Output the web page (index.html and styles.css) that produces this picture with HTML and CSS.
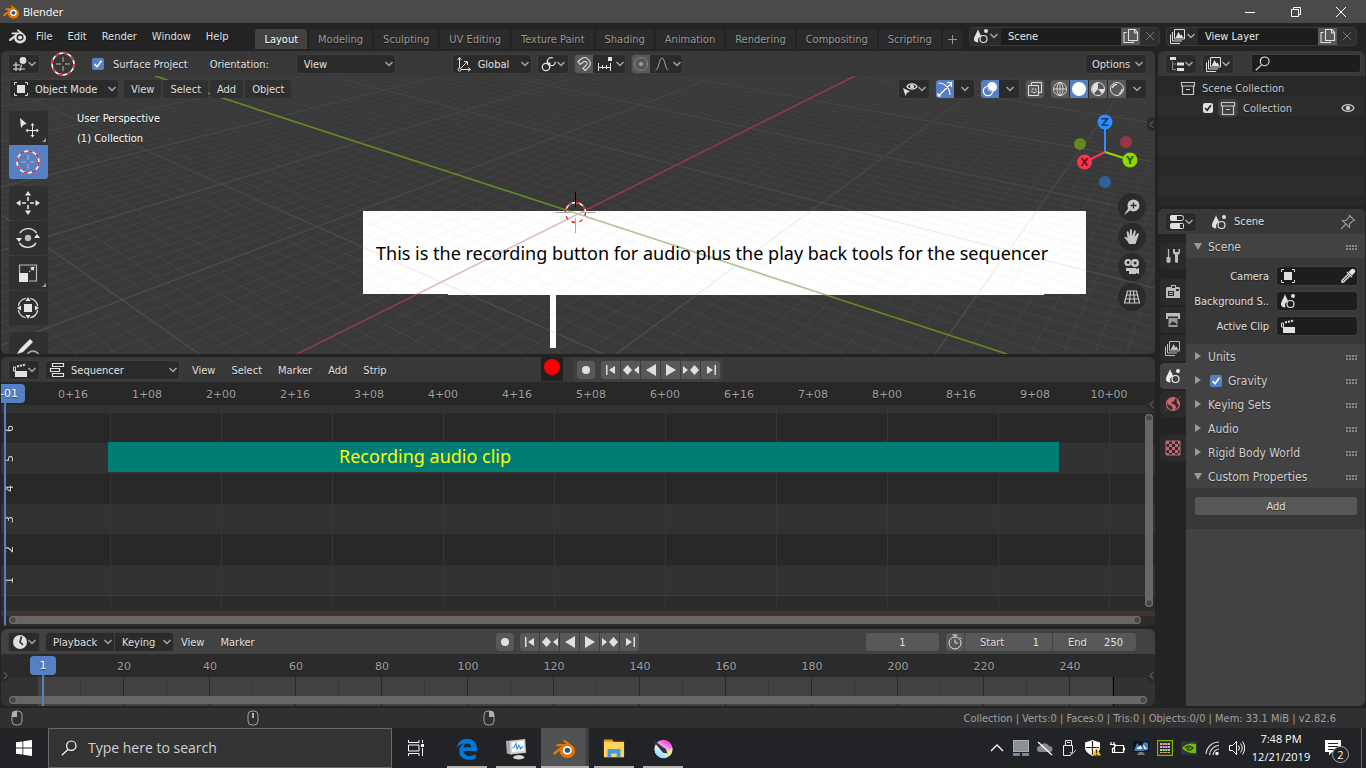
FILE: index.html
```html
<!DOCTYPE html>
<html lang="en">
<head>
<meta charset="utf-8">
<title>Blender</title>
<link rel="stylesheet" href="styles.css">
</head>
<body>
<svg class="defs" aria-hidden="true">
  <defs>
    <symbol id="blender" viewBox="0 0 24 24"><path fill="currentColor" d="M7.35 14.831c.006.314.106.922.256 1.398a7.372 7.372 0 0 0 1.593 2.757 8.227 8.227 0 0 0 2.787 2.001 8.947 8.947 0 0 0 3.66.76 8.964 8.964 0 0 0 3.657-.772 8.285 8.285 0 0 0 2.785-2.01 7.428 7.428 0 0 0 1.592-2.762 6.964 6.964 0 0 0 .25-3.074 7.123 7.123 0 0 0-1.016-2.779 7.764 7.764 0 0 0-1.852-2.043L13.566 2.55c-.492-.378-1.319-.376-1.86.002-.547.382-.609 1.015-.123 1.415l3.126 2.543-9.53.01c-.788.001-1.545.518-1.695 1.172-.154.665.38 1.217 1.2 1.22l4.83-.01-8.654 6.642c-.813.622-1.075 1.658-.563 2.313.52.667 1.625.668 2.447.004L7.414 14s-.069.52-.063.831z"/><ellipse class="eye-white" cx="15.600" cy="13.300" rx="4.900" ry="4.700"/><ellipse class="eye-ball" cx="15.700" cy="13.300" rx="3" ry="2.800"/></symbol>
    <symbol id="cursor3d" viewBox="0 0 24 24"><circle cx="12" cy="12" r="11" fill="none" stroke="#f4f4f4" stroke-width="1.600"/><circle cx="12" cy="12" r="11" fill="none" stroke="#e02424" stroke-width="1.600" stroke-dasharray="4.320"/><path d="M12 5v5M12 14v5M5 12h5M14 12h5" stroke="#b4b4b4" fill="none"/></symbol>
    <symbol id="area3d" viewBox="0 0 16 16"><path d="M4 6v9M9.500 8.500 8 15M1 9h7M1 13h12" stroke="currentColor" fill="none" stroke-width="1.100"/><circle cx="11" cy="4.500" r="3.400" fill="currentColor"/></symbol>
    <symbol id="object" viewBox="0 0 16 16"><path d="M4 1.500H1.500V4M12 1.500h2.500V4M4 14.500H1.500V12M12 14.500h2.500V12" stroke="currentColor" fill="none"/><path d="M4 4h8v8H4z" fill="currentColor"/></symbol>
    <symbol id="axes" viewBox="0 0 16 16"><path d="M3.500 12V2M1.500 4l2-2.500 2 2.500M5 13.500h9M12 11.500l2.500 2-2.500 2M4.500 12.500 11 6M8 5.500h3.500V9" fill="none" stroke="currentColor"/><circle cx="3.500" cy="13.500" r="1.500" fill="none" stroke="currentColor"/></symbol>
    <symbol id="pivot" viewBox="0 0 16 16"><circle cx="10.300" cy="5.700" r="4" fill="none" stroke="currentColor" stroke-width="1.300" stroke-dasharray="20 5"/><circle cx="5" cy="11" r="3.700" fill="none" stroke="currentColor" stroke-width="1.300"/><circle cx="8" cy="8" r="1.700" fill="currentColor"/></symbol>
    <symbol id="magnet" viewBox="0 0 16 16"><path d="M2 5.500 6.500 2C11 0 16 6 13.500 10L9.500 14.500 7 12.500 10.500 8.800C12 6.500 9.500 4.500 7.500 5.700L4 8.500z" fill="none" stroke="currentColor" stroke-width="1.100"/></symbol>
    <symbol id="snapinc" viewBox="0 0 16 16"><path d="M1.500 7v8M13.500 7v8M5.500 9v4M9.500 9v4M1.500 11.500h12" stroke="currentColor" fill="none"/><path d="M11 1h4v4h-4z" fill="currentColor"/></symbol>
    <symbol id="prop" viewBox="0 0 16 16"><circle cx="8" cy="8" r="6.500" fill="none" stroke="#858585"/><circle cx="8" cy="8" r="2" fill="currentColor"/></symbol>
    <symbol id="curve" viewBox="0 0 16 16"><path d="M1.500 14C5 14 5 2 8 2s3 12 6.500 12" fill="none" stroke="currentColor"/></symbol>
    <symbol id="scene" viewBox="0 0 16 16"><path d="M5 1C4 5 1 8 1 11.500 1 13.500 3 14.500 5.500 14.300A5 5 0 0 1 8 8C7 5 5.800 4 5 1z" fill="currentColor"/><circle cx="10.500" cy="11" r="3.500" fill="none" stroke="currentColor" stroke-width="1.200"/><circle cx="13" cy="3" r="2" fill="currentColor"/></symbol>
    <symbol id="layers" viewBox="0 0 16 16"><path d="M4.500 1.500h10v9.500h-10zM2.500 4v9H12M.5 6.500v9H10" fill="none" stroke="currentColor"/><path d="m5.500 10 3-6 2 3.500 1-1 2 3.500z" fill="currentColor"/></symbol>
    <symbol id="copy" viewBox="0 0 16 16"><path d="M5.500 1.500H12l2.500 3v8h-9zM11.500 2v3h3M3.500 4.500h-2.500v10h9.500v-1" fill="none" stroke="currentColor" stroke-width="1.100"/></symbol>
    <symbol id="x" viewBox="0 0 16 16"><path d="m4 4 8 8m0-8-8 8" stroke="currentColor" fill="none"/></symbol>
    <symbol id="visible" viewBox="0 0 16 16"><path d="M5 5.500C7 2 13 2 15 5.500 13 9 7 9 5 5.500z" fill="none" stroke="currentColor" stroke-width="1.400"/><circle cx="10" cy="5.500" r="2" fill="currentColor"/><path d="m1 7 7 3.500-3 1.200L3.500 15z" fill="currentColor"/></symbol>
    <symbol id="gizmo" viewBox="0 0 16 16"><path d="M1.500 2C8 2 13 7 13 14M2 14.500 14 2.500M10 1.500h4.500V6M1 12v3h3" fill="none" stroke="currentColor" stroke-width="1.200"/></symbol>
    <symbol id="overlay" viewBox="0 0 16 16"><circle cx="10" cy="6" r="5" fill="currentColor"/><circle cx="6" cy="10" r="4.700" fill="none" stroke="currentColor" stroke-width="1.200"/><path d="M5.500 5.500a5 5 0 0 0 5 5" stroke="#5680c2" fill="none"/></symbol>
    <symbol id="xray" viewBox="0 0 16 16"><path d="M4.500 4V1.500h10v10H12M1.500 4.500h10v10h-10z" fill="none" stroke="currentColor"/><path d="M5 11.500V8h4v3.500z" fill="none" stroke="currentColor" stroke-dasharray="2 1"/></symbol>
    <symbol id="wire" viewBox="0 0 16 16"><g fill="none" stroke="currentColor" stroke-width=".9"><circle cx="8" cy="8" r="6.500"/><ellipse cx="8" cy="8" rx="3" ry="6.500"/><path d="M1.500 8h13M8 1.500v13"/></g></symbol>
    <symbol id="solid" viewBox="0 0 16 16"><circle cx="8" cy="8" r="7" fill="currentColor"/></symbol>
    <symbol id="material" viewBox="0 0 16 16"><circle cx="8" cy="8" r="6.500" fill="none" stroke="currentColor"/><path d="M8 1.500V8l-4 4.500A6.500 6.500 0 0 1 8 1.500zM8 8h6.500A6.500 6.500 0 0 1 12 13z" fill="currentColor"/></symbol>
    <symbol id="rendered" viewBox="0 0 16 16"><circle cx="8" cy="8" r="6.500" fill="none" stroke="currentColor"/><path d="M3.500 7A4.500 4.500 0 0 1 8 3.500M10 13a6 6 0 0 0 3-5" fill="none" stroke="currentColor" stroke-width="1.400"/></symbol>
    <symbol id="clip" viewBox="0 0 16 16"><path d="M3 9h12v6H3z" fill="currentColor"/><path d="M1.500 5v4h2V5z" fill="none" stroke="currentColor"/><path d="m5 4.500 9-2" stroke="currentColor" stroke-width="2" stroke-dasharray="2 1" fill="none"/></symbol>
    <symbol id="seq" viewBox="0 0 16 16"><path d="M3.500 1.500h11v3h-11zM1.500 6.500h9v3h-9zM3.500 11.500h11v3h-11z" fill="none" stroke="currentColor" stroke-width="1.200"/></symbol>
    <symbol id="clock" viewBox="0 0 16 16"><circle cx="8" cy="8" r="7" fill="currentColor"/><path d="M9.500 2.500 8 8l3 3" stroke="#282828" stroke-width="1.600" fill="none"/></symbol>
    <symbol id="stopwatch" viewBox="0 0 16 16"><circle cx="8" cy="9" r="6" fill="none" stroke="currentColor"/><path d="M8 3V1M5.500 1h5M8 5.500V9h3M13 3.500l1.500 1.500" stroke="currentColor" fill="none"/></symbol>
    <symbol id="rec" viewBox="0 0 16 16"><circle cx="8" cy="8" r="4" fill="currentColor"/></symbol>
    <symbol id="first" viewBox="0 0 16 16"><path d="M3 3h1.500v10H3zM12 4v8L6 8z" fill="currentColor"/></symbol>
    <symbol id="prevkey" viewBox="0 0 16 16"><path d="m0 8 4.500-5L9 8l-4.500 5zM16 4v8l-5-4z" fill="currentColor"/></symbol>
    <symbol id="rev" viewBox="0 0 16 16"><path d="M13 2v12L3 8z" fill="currentColor"/></symbol>
    <symbol id="play" viewBox="0 0 16 16"><path d="M3 2v12l10-6z" fill="currentColor"/></symbol>
    <symbol id="nextkey" viewBox="0 0 16 16"><path d="m16 8-4.500-5L7 8l4.500 5zM0 4v8l5-4z" fill="currentColor"/></symbol>
    <symbol id="last" viewBox="0 0 16 16"><path d="M11.500 3H13v10h-1.500zM4 4v8l6-4z" fill="currentColor"/></symbol>
    <symbol id="search" viewBox="0 0 16 16"><circle cx="10.300" cy="5.700" r="4.700" fill="none" stroke="currentColor" stroke-width="1.200"/><path d="M7 9.500.8 15.200" stroke="currentColor" stroke-width="1.200"/></symbol>
    <symbol id="tree" viewBox="0 0 16 16"><path d="M1 1h6v3H1zM8 6.500h7v3H8zM8 12h7v3H8z" fill="currentColor"/><path d="M3.500 5v8.500H7M3.500 8H7" stroke="#888" fill="none"/></symbol>
    <symbol id="box" viewBox="0 0 16 16"><path d="M1.500 2.500h13V6h-13zM2.500 6v8.500h11V6M6 9.500h4" fill="none" stroke="currentColor" stroke-width="1.200"/></symbol>
    <symbol id="eye" viewBox="0 0 16 16"><path d="M2 8C4 3.500 12 3.500 14 8 12 12.500 4 12.500 2 8z" fill="none" stroke="currentColor" stroke-width="1.300"/><circle cx="8" cy="8" r="2.300" fill="currentColor"/></symbol>
    <symbol id="props" viewBox="0 0 16 16"><rect x="1.500" y="1.500" width="13" height="5" rx="2" fill="none" stroke="currentColor"/><rect x="1" y="1" width="7" height="6" rx="2" fill="currentColor"/><rect x="1" y="9" width="14" height="6" rx="2" fill="currentColor"/><path d="M11 10h3v4h-3z" fill="#282828"/></symbol>
    <symbol id="pin" viewBox="0 0 16 16"><path d="m9.500 1.500 5 5-2 .5-3 3v3.500l-7-7H6l3-3zM6 10l-5 5" fill="none" stroke="currentColor" stroke-width="1.100"/></symbol>
    <symbol id="tools" viewBox="0 0 16 16"><path d="M3.500 1v8" stroke="currentColor" stroke-width="1.200"/><path d="M1.500 9h4v5q-2 2-4 0zM8 1v4l2 2v7q1.500 2 3 0V7l2-2V1l-1.500 0v3h-3.500V1z" fill="currentColor"/></symbol>
    <symbol id="render" viewBox="0 0 16 16"><path d="M2 3h4V1h5v2h3l1 1v10H1V4z" fill="currentColor"/><path d="M3 7h6v5H3zM11 5h3v2h-3zM7 2h3v2H7z" fill="#2b2b2b"/><path d="M4 8.500h4M4 10.500h4" stroke="currentColor"/></symbol>
    <symbol id="output" viewBox="0 0 16 16"><path d="M1 1h14v6h-2V4.500H3V7H1z" fill="currentColor"/><path d="M3.500 6h9v9h-9z" fill="currentColor" opacity=".75"/><path d="m4.500 13 3-4 1.500 2 1-1 2 3z" fill="#2b2b2b"/></symbol>
    <symbol id="world" viewBox="0 0 16 16"><circle cx="8" cy="8" r="6.500" fill="none" stroke="currentColor" stroke-width="1.200"/><path d="M2 5 6 2l4 0-1 3-3 1 1 2 3 1 1 3-3 3-1-5-4-2zM12 4l2 2v3l-2-2zM0 15l2-2M14 2l2-2" fill="currentColor" stroke="currentColor" stroke-width=".5"/></symbol>
    <symbol id="checker" viewBox="0 0 16 16"><path d="M1 1h14v14H1z" fill="none" stroke="currentColor"/><path d="M1 1h3v3H1zM7 1h3v3H7zM13 1h2v3h-2zM4 4h3v3H4zM10 4h3v3h-3zM1 7h3v3H1zM7 7h3v3H7zM13 7h2v3h-2zM4 10h3v3H4zM10 10h3v3h-3zM1 13h3v2H1zM7 13h3v2H7zM13 13h2v2h-2z" fill="currentColor"/></symbol>
    <symbol id="dropper" viewBox="0 0 16 16"><path d="M14.500 1.500c1 1 1 2.500 0 3.500L12 7.500 8.500 4 11 1.500c1-1 2.500-1 3.500 0z" fill="currentColor"/><path d="m7 4 5 5M9 5.500l-7 7V14h1.500l7-7" fill="none" stroke="currentColor" stroke-width="1.400"/></symbol>
  </defs>
</svg>

<header class="titlebar">
  <svg class="i16 logo"><use href="#blender"/></svg>
  <h1>Blender</h1>
  <div class="winbtns">
    <button aria-label="Minimize"><svg viewBox="0 0 12 12"><path d="M1 6.500h10"/></svg></button>
    <button aria-label="Restore"><svg viewBox="0 0 12 12"><path d="M1.500 3.500h7v7h-7zM3.500 3.500v-2h7v7h-2"/></svg></button>
    <button aria-label="Close"><svg viewBox="0 0 12 12"><path d="m1 1 10 10M11 1 1 11"/></svg></button>
  </div>
</header>

<nav class="menubar">
  <button class="plain" aria-label="Blender menu"><svg class="i16"><use href="#blender"/></svg></button>
  <button class="plain">File</button><button class="plain">Edit</button><button class="plain">Render</button><button class="plain">Window</button><button class="plain">Help</button>
  <div class="tabs">
    <button class="on">Layout</button><button>Modeling</button><button>Sculpting</button><button>UV Editing</button><button>Texture Paint</button><button>Shading</button><button>Animation</button><button>Rendering</button><button>Compositing</button><button>Scripting</button><button class="add" aria-label="Add workspace"><svg viewBox="0 0 9 9"><path d="M4.500 0v9M0 4.500h9" stroke="currentColor"/></svg></button>
  </div>
  <div class="idblock">
    <button class="drop" aria-label="Browse scene"><svg class="i16"><use href="#scene"/></svg></button>
    <input value="Scene" aria-label="Scene name">
    <button class="lit" aria-label="New scene"><svg class="i16"><use href="#copy"/></svg></button>
    <button class="off" aria-label="Delete scene"><svg class="i16"><use href="#x"/></svg></button>
  </div>
  <div class="idblock">
    <button class="drop" aria-label="Browse view layer"><svg class="i16"><use href="#layers"/></svg></button>
    <input value="View Layer" aria-label="View layer name">
    <button class="lit" aria-label="New view layer"><svg class="i16"><use href="#copy"/></svg></button>
    <button class="off" aria-label="Delete view layer"><svg class="i16"><use href="#x"/></svg></button>
  </div>
</nav>

<main class="workspace">
  <div class="left">
    <section class="area viewport">
      <svg class="scene" viewBox="1 51 1154 303" preserveAspectRatio="xMidYMid slice">
        <defs>
          <path id="minor" d=""/><path id="major" d=""/>
          <linearGradient id="fadeRamp" x1="0" y1="51" x2="0" y2="260" gradientUnits="userSpaceOnUse"><stop offset="0" stop-color="#555"/><stop offset="1" stop-color="#fff"/></linearGradient>
          <mask id="fade" maskUnits="userSpaceOnUse" x="0" y="0" width="1366" height="400"><path d="M0 0h1366v400H0z" fill="url(#fadeRamp)"/></mask>
          <clipPath id="noteClip"><path d="M363 211h723v83h-42v1H556v53h-6v-53H448v-1h-85z"/></clipPath>
        </defs>
        <path d="M0 0h1366v400H0z" fill="#393939"/>
        <g mask="url(#fade)"><use href="#minor" stroke="#444"/><use href="#major" stroke="#4b4b4b" stroke-width="1.500"/></g>
        <path d="M297 354 855 76" stroke="#8f3c49" stroke-width="1.600"/>
        <path d="M155 76 1007 354" stroke="#648a24" stroke-width="1.600"/>
        <g clip-path="url(#noteClip)">
          <path d="M0 0h1366v400H0z" fill="#fff"/>
          <use href="#minor" stroke="#f8f8f8"/><use href="#major" stroke="#efefef" stroke-width="1.500"/>
          <path d="M297 354 855 76" stroke="#d9bdc3" stroke-width="1.600"/>
          <path d="M155 76 1007 354" stroke="#b3c197" stroke-width="1.600"/>
        </g>
        <circle cx="575.500" cy="212.500" r="10" fill="none" stroke="#fff" stroke-width="1.300"/>
        <circle cx="575.500" cy="212.500" r="10" fill="none" stroke="#e01010" stroke-width="1.300" stroke-dasharray="3.927"/>
        <path d="M575.500 192v15" stroke="#000"/><path d="M555 212.500h15M581 212.500h15M575.500 218v15" stroke="#aaa"/>
        <text class="note" x="376" y="260">This is the recording button for audio plus the play back tools for the sequencer</text>
      </svg>
      <div class="toolhead">
        <button class="drop fld w30" aria-label="Editor type"><svg class="i16"><use href="#area3d"/></svg></button>
        <svg class="i24"><use href="#cursor3d"/></svg>
        <label class="check"><input type="checkbox" checked> <span>Surface Project</span></label>
        <label class="orient" for="orient">Orientation:</label>
        <select id="orient" class="fld w98"><option>View</option></select>
        <span class="sel w78"><svg class="i16"><use href="#axes"/></svg><select class="fld" aria-label="Transform orientation"><option>Global</option></select></span>
        <button class="drop fld w30" aria-label="Pivot point"><svg class="i16"><use href="#pivot"/></svg></button>
        <span class="group"><button class="lit" aria-label="Snap"><svg class="i16"><use href="#magnet"/></svg></button><button class="drop w31" aria-label="Snap to"><svg class="i16"><use href="#snapinc"/></svg></button></span>
        <span class="group dim"><button class="lit" aria-label="Proportional editing"><svg class="i16"><use href="#prop"/></svg></button><button class="drop w31" aria-label="Falloff"><svg class="i16"><use href="#curve"/></svg></button></span>
        <button class="drop fld opts">Options</button>
      </div>
      <div class="viewhead">
        <span class="sel w108"><svg class="i16"><use href="#object"/></svg><select class="fld" aria-label="Mode"><option>Object Mode</option></select></span>
        <span class="menus"><button>View</button><button>Select</button><button>Add</button><button>Object</button></span>
        <div class="viewright">
          <button class="drop fld w30" aria-label="Visibility"><svg class="i16"><use href="#visible"/></svg></button>
          <span class="group"><button class="blue" aria-label="Gizmos"><svg class="i16"><use href="#gizmo"/></svg></button><button class="drop w19" aria-label="Gizmo options"></button></span>
          <span class="group"><button class="blue" aria-label="Overlays"><svg class="i16"><use href="#overlay"/></svg></button><button class="drop w19" aria-label="Overlay options"></button></span>
          <span class="group"><button class="lit" aria-label="X-ray"><svg class="i16"><use href="#xray"/></svg></button></span>
          <span class="group"><button class="lit" aria-label="Wireframe"><svg class="i16"><use href="#wire"/></svg></button><button class="blue" aria-label="Solid"><svg class="i16"><use href="#solid"/></svg></button><button class="lit" aria-label="Material"><svg class="i16"><use href="#material"/></svg></button><button class="lit" aria-label="Rendered"><svg class="i16"><use href="#rendered"/></svg></button><button class="drop w19" aria-label="Shading options"></button></span>
        </div>
      </div>
      <div class="viewbody">
        <div class="tools">
          <button class="more" aria-label="Select"><svg viewBox="0 0 24 24"><path d="m4 2 7 6-3 .5L5 12z" fill="#e6e6e6"/><path d="M16.500 9v11M11 14.500h11" stroke="#e6e6e6"/><path d="m16.500 7 2 2.500h-4zM16.500 21.500l2-2.500h-4zM9.500 14.500l2.500-2v4zM23 14.500l-2.500-2v4z" fill="#e6e6e6"/></svg></button>
          <button class="on" aria-label="Cursor"><svg><use href="#cursor3d"/></svg></button>
          <button class="first" aria-label="Move"><svg viewBox="0 0 24 24"><path d="M12 6v4M12 14v4M6 12h4M14 12h4" stroke="#e6e6e6" stroke-width="1.600"/><path d="m12 0 3 4.500H9zM12 24l3-4.500H9zM0 12l4.500-3v6zM24 12l-4.500-3v6z" fill="#e6e6e6"/></svg></button>
          <button aria-label="Rotate"><svg viewBox="0 0 24 24"><path d="M4 7a10 10 0 0 1 16.500 0M20 17a10 10 0 0 1-16.500 0" stroke="#e6e6e6" stroke-width="1.400" fill="none"/><path d="m0 12h6l-3 4zM24 12h-6l3-4z" fill="#e6e6e6"/><circle cx="12" cy="12" r="3.200" fill="#bbb"/></svg></button>
          <button class="more" aria-label="Scale"><svg viewBox="0 0 24 24"><path d="M3.500 12V4h17v16H13" stroke="#bbb" fill="none" stroke-width="1.200"/><path d="M3 12h9v9H3z" fill="#e6e6e6"/><path d="m13 11 4-4" stroke="#e6e6e6" stroke-dasharray="2 1"/><path d="m18.500 5.500-1 4.500-3.500-3.500z" fill="#e6e6e6"/></svg></button>
          <button aria-label="Transform"><svg viewBox="0 0 24 24"><circle cx="12" cy="12" r="10" stroke="#e6e6e6" fill="none" stroke-width="1.200" stroke-dasharray="11 4.700" stroke-dashoffset="-2.300"/><path d="M8 8h8v8H8zM12 1l2.500 4h-5zM12 23l2.500-4h-5zM1 12l4-2.500v5zM23 12l-4-2.500v5z" fill="#e6e6e6"/></svg></button>
          <button class="first" aria-label="Annotate"><svg viewBox="0 0 24 24"><path d="m1 17 3-5L14 2l3 3L7 15z" fill="#e6e6e6"/><path d="M11 20a6 6 0 0 1 12 0" fill="none" stroke="#7cc9a2" stroke-width="1.500"/></svg></button>
        </div>
        <div class="stats"><p>User Perspective</p><p>(1) Collection</p></div>
        <div class="navcol">
          <svg class="axisgizmo" viewBox="1073 114 66 74"><path d="M1105 152v-28" stroke="#2c8fff" stroke-width="2"/><path d="m1105 152-20 10" stroke="#ff3352" stroke-width="2"/><path d="m1105 152 25 8" stroke="#8bdc00" stroke-width="2"/><circle cx="1080" cy="144" r="6" fill="#648a1c"/><circle cx="1126" cy="142" r="6" fill="#993544"/><circle cx="1105" cy="182" r="6" fill="#2f6299"/><circle cx="1105" cy="122" r="7.500" fill="#2c8fff"/><circle cx="1084.500" cy="162" r="7.500" fill="#ff3352"/><circle cx="1130" cy="160" r="7.500" fill="#8bdc00"/><g class="axname"><text x="1105" y="126">Z</text><text x="1084.500" y="166">X</text><text x="1130" y="164">Y</text></g></svg>
          <button aria-label="Zoom"><svg class="i16"><g fill="currentColor"><circle cx="9.500" cy="6.500" r="6"/><path d="m4.500 9 2 2-5.500 4.500L.5 15z"/></g><path d="M9.500 3.500v6M6.500 6.500h6" stroke="#2b2b2b" stroke-width="1.300"/></svg></button>
          <button aria-label="Pan"><svg class="i16"><path d="M5 15C4 12 1 9.500.3 8.500c0-1.500 2-.5 3.200 1L2.700 3c.3-1.300 1.600-1 1.900 0l1 4.500L6 1c.4-1.200 1.600-1.200 1.900 0L8.200 7.300 10 2c.5-1 1.800-.8 1.800.3L10.800 8l2.500-3.400c.8-.8 2 0 1.500 1L12.500 12l-1 3z" fill="currentColor"/></svg></button>
          <button aria-label="Camera"><svg class="i16"><path fill="currentColor" fill-rule="evenodd" d="M4 0a3.500 3.500 0 1 1-.1 7 3.500 3.500 0 0 1 .1-7zm0 2a1.500 1.500 0 1 0 .1 3A1.500 1.500 0 0 0 4 2zM11 0a4 4 0 1 1-.1 8 4 4 0 0 1 .1-8zm0 2.500a1.500 1.500 0 1 0 .1 3 1.500 1.500 0 0 0-.1-3zM3 9h9v1l3-1v6l-3-1v1H5v-3H2V9z"/></svg></button>
          <button aria-label="Perspective"><svg class="i16"><path d="M3.500 2h9l3 12H.5zM2.500 6h11M1.500 10h13M6.500 2l-1.200 12M9.500 2l1.200 12" fill="none" stroke="currentColor" stroke-width="1.200"/></svg></button>
        </div>
        <button class="edge right" aria-label="Show sidebar"><svg viewBox="0 0 6 10"><path d="M5 1 1 5l4 4"/></svg></button>
      </div>
    </section>

    <section class="area sequencer">
      <div class="head">
        <button class="drop fld w30" aria-label="Editor type"><svg class="i16"><use href="#clip"/></svg></button>
        <span class="sel w133"><svg class="i16"><use href="#seq"/></svg><select class="fld" aria-label="Sequencer view"><option>Sequencer</option></select></span>
        <span class="links"><button class="plain">View</button><button class="plain">Select</button><button class="plain">Marker</button><button class="plain">Add</button><button class="plain">Strip</button></span>
        <button class="record" aria-label="Record audio"></button>
        <span class="transport boxed">
          <span class="group"><button class="lit" aria-label="Auto keying"><svg class="i16"><use href="#rec"/></svg></button></span>
          <span class="group keys"><button class="lit" aria-label="Jump to start"><svg class="i16"><use href="#first"/></svg></button><button class="lit" aria-label="Previous key"><svg class="i16"><use href="#prevkey"/></svg></button><button class="lit" aria-label="Play reverse"><svg class="i16"><use href="#rev"/></svg></button><button class="lit" aria-label="Play"><svg class="i16"><use href="#play"/></svg></button><button class="lit" aria-label="Next key"><svg class="i16"><use href="#nextkey"/></svg></button><button class="lit" aria-label="Jump to end"><svg class="i16"><use href="#last"/></svg></button></span>
        </span>
      </div>
      <div class="ruler seqruler"><span>0+16</span><span>1+08</span><span>2+00</span><span>2+16</span><span>3+08</span><span>4+00</span><span>4+16</span><span>5+08</span><span>6+00</span><span>6+16</span><span>7+08</span><span>8+00</span><span>8+16</span><span>9+08</span><span>10+00</span></div>
      <div class="tracks">
        <div class="track cap"></div>
        <div class="track"><b>6</b></div>
        <div class="track"><b>5</b><div class="strip">Recording audio clip</div></div>
        <div class="track"><b>4</b></div>
        <div class="track"><b>3</b></div>
        <div class="track"><b>2</b></div>
        <div class="track"><b>1</b></div>
        <div class="track base"></div>
        <div class="brown"></div>
        <div class="scroll"><i></i><i></i></div>
        <div class="vscroll"><i></i><i></i></div>
      </div>
      <div class="playhead seqhead"><output>-01</output></div>
      <button class="edge right" aria-label="Show sidebar"><svg viewBox="0 0 6 10"><path d="M5 1 1 5l4 4"/></svg></button>
    </section>

    <section class="area timeline">
      <div class="head">
        <button class="drop fld w30" aria-label="Editor type"><svg class="i16"><use href="#clock"/></svg></button>
        <span class="group pk"><button class="drop txt">Playback</button><button class="drop txt">Keying</button></span>
        <span class="links"><button class="plain">View</button><button class="plain">Marker</button></span>
        <span class="transport">
          <span class="group"><button class="lit" aria-label="Auto keying"><svg class="i16"><use href="#rec"/></svg></button></span>
          <span class="group keys"><button class="lit" aria-label="Jump to start"><svg class="i16"><use href="#first"/></svg></button><button class="lit" aria-label="Previous key"><svg class="i16"><use href="#prevkey"/></svg></button><button class="lit" aria-label="Play reverse"><svg class="i16"><use href="#rev"/></svg></button><button class="lit" aria-label="Play"><svg class="i16"><use href="#play"/></svg></button><button class="lit" aria-label="Next key"><svg class="i16"><use href="#nextkey"/></svg></button><button class="lit" aria-label="Jump to end"><svg class="i16"><use href="#last"/></svg></button></span>
        </span>
        <div class="frames">
          <input class="cur" value="1" aria-label="Current frame">
          <span class="group"><button class="lit" aria-label="Preview range"><svg class="i16"><use href="#stopwatch"/></svg></button><label class="num start">Start<input value="1"></label><label class="num end">End<input value="250"></label></span>
        </div>
      </div>
      <div class="ruler timeruler"><span>20</span><span>40</span><span>60</span><span>80</span><span>100</span><span>120</span><span>140</span><span>160</span><span>180</span><span>200</span><span>220</span><span>240</span></div>
      <div class="timebody"><div class="range"></div><div class="scroll"><i></i><i></i></div></div>
      <div class="playhead timehead"><output>1</output></div>
      <button class="edge leftside" aria-label="Show channels"><svg viewBox="0 0 6 10"><path d="m1 1 4 4-4 4"/></svg></button>
      <button class="edge right" aria-label="Show sidebar"><svg viewBox="0 0 6 10"><path d="M5 1 1 5l4 4"/></svg></button>
    </section>
  </div>

  <div class="rightcol">
    <section class="area outliner">
      <div class="head">
        <button class="drop fld w30" aria-label="Editor type"><svg class="i16"><use href="#tree"/></svg></button>
        <button class="drop fld w30" aria-label="Display mode"><svg class="i16"><use href="#layers"/></svg></button>
        <label class="find"><svg class="i16"><use href="#search"/></svg><input type="search" aria-label="Filter"></label>
      </div>
      <div class="rows">
        <div class="row root"><svg class="i16"><use href="#box"/></svg>Scene Collection</div>
        <div class="row child"><input type="checkbox" class="white" checked aria-label="Include collection"><span class="ring"><svg class="i16"><use href="#box"/></svg></span>Collection<button class="plain" aria-label="Hide"><svg class="i16"><use href="#eye"/></svg></button></div>
      </div>
    </section>
    <section class="area properties">
      <div class="head">
        <button class="drop fld w30" aria-label="Editor type"><svg class="i16"><use href="#props"/></svg></button>
        <span class="crumb"><svg class="i16"><use href="#scene"/></svg>Scene</span>
        <button class="plain pin" aria-label="Pin"><svg class="i16"><use href="#pin"/></svg></button>
      </div>
      <div class="propbody">
        <nav class="ptabs">
          <button aria-label="Tool"><svg class="i16"><use href="#tools"/></svg></button>
          <button class="gap" aria-label="Render"><svg class="i16"><use href="#render"/></svg></button>
          <button aria-label="Output"><svg class="i16"><use href="#output"/></svg></button>
          <button aria-label="View layer"><svg class="i16"><use href="#layers"/></svg></button>
          <button class="on" aria-label="Scene"><svg class="i16"><use href="#scene"/></svg></button>
          <button class="pink" aria-label="World"><svg class="i16"><use href="#world"/></svg></button>
          <button class="pink gap2" aria-label="Texture"><svg class="i16"><use href="#checker"/></svg></button>
        </nav>
        <div class="panels">
          <h2 class="open">Scene</h2>
          <div class="pbody fields">
            <label for="cam">Camera</label><span class="idfield"><svg class="i16"><use href="#object"/></svg><input id="cam"><svg class="i16"><use href="#dropper"/></svg></span>
            <label for="bg">Background S..</label><span class="idfield"><svg class="i16"><use href="#scene"/></svg><input id="bg"></span>
            <label for="ac">Active Clip</label><span class="idfield"><svg class="i16"><use href="#clip"/></svg><input id="ac"></span>
          </div>
          <h2>Units</h2>
          <h2><label><input type="checkbox" checked>Gravity</label></h2>
          <h2>Keying Sets</h2>
          <h2>Audio</h2>
          <h2>Rigid Body World</h2>
          <h2 class="open">Custom Properties</h2>
          <div class="pbody addwrap"><button class="addbtn">Add</button></div>
        </div>
      </div>
    </section>
  </div>
</main>

<footer class="status">
  <svg class="mouse" viewBox="0 0 12 16"><rect x="1" y="1" width="10" height="14" rx="4"/><path d="M1 7V4q0-3 3-3h2v6z" class="f"/></svg>
  <svg class="mouse" viewBox="0 0 12 16"><rect x="1" y="1" width="10" height="14" rx="4"/><rect x="5" y="3" width="2" height="5" class="f"/></svg>
  <svg class="mouse" viewBox="0 0 12 16"><rect x="1" y="1" width="10" height="14" rx="4"/><path d="M11 7V4q0-3-3-3H6v6z" class="f"/></svg>
  <span>Collection | Verts:0 | Faces:0 | Tris:0 | Objects:0/0 | Mem: 33.1 MiB | v2.82.6</span>
</footer>

<div class="taskbar">
  <button class="startbtn" aria-label="Start"><svg viewBox="0 0 16 16"><path d="M0 2.300 6.500 1.400v6.200H0zM7.300 1.200 16 0v7.600H7.300zM0 8.400h6.500v6.200L0 13.700zM7.300 8.400H16V16l-8.700-1.200z" fill="#fff"/></svg></button>
  <label class="wsearch"><svg class="i16"><use href="#search"/></svg><input placeholder="Type here to search" aria-label="Search"></label>
  <button class="tview" aria-label="Task view"><svg viewBox="0 0 16 16"><path d="M.5 0v2.500h10.500V0M.5 16v-2.500h10.500V16M.5 5h10.500v6H.5zM14.500 0v3M14.500 8v8" fill="none" stroke="#fff"/><path d="M13 4h3v3h-3z" fill="#fff"/></svg></button>
  <button class="app" aria-label="Edge"><svg viewBox="0 0 24 24"><path fill="#0078d7" fill-rule="evenodd" d="M1 10.500C2 4 6.500.8 12 .8 19 .8 23 5.800 23 12v2.200H8.200C8.400 18 11.500 19.600 15 19.600c2.600 0 4.800-.8 6.600-1.800V22c-2.100 1.200-4.600 1.600-7.400 1.600C7.500 23.600 3.400 20 3.400 14.500c0-3.700 2-6.700 5.200-8.300C5 6.500 2.500 8 1 10.500zM8.300 10h8.300c0-2.500-1.600-4.100-4-4.100-2.600 0-3.900 1.700-4.300 4.100z"/></svg></button>
  <button class="app" aria-label="Resource monitor"><svg viewBox="0 0 24 24"><path d="M1 3h6v15l-5-1z" fill="#a9aaa6"/><path d="M5 3 22 1l1 15-17 2z" fill="#cfd1cf"/><path d="m7 5 13.500-2 .5 11-13.500 1.500z" fill="#fafcff"/><path d="m8 11 2-1 2-4 1 6 2-4 2 4 1-2h2" fill="none" stroke="#3a8ad0" stroke-width="1.200"/><ellipse cx="15" cy="21" rx="6" ry="2.500" fill="#d8d8d6"/></svg></button>
  <button class="app active" aria-label="Blender"><svg class="logo"><use href="#blender"/></svg></button>
  <button class="app" aria-label="File Explorer"><svg viewBox="0 0 24 24"><path d="M1 2h9l1.500 2H23v17H1z" fill="#ffd45e"/><path d="M1 2h9l1.500 2H1z" fill="#e2950c"/><path d="M5 21v-9h14v9h-4v-4H9v4z" fill="#3e9bdc"/></svg></button>
  <button class="app" aria-label="Krita"><svg viewBox="0 0 24 24"><defs><linearGradient id="kr" x1="0" y1="1" x2=".6" y2="0"><stop offset="0" stop-color="#3fe6ff"/><stop offset=".5" stop-color="#e8e6ff"/><stop offset="1" stop-color="#ff3bd0"/></linearGradient></defs><circle cx="12.500" cy="12" r="10" fill="url(#kr)"/><path d="M18 20a10 10 0 0 0 4-10l-6 6z" fill="#f3f07a"/><path d="M1 3 13 13l-1.500 2z" fill="#444"/><path d="m1 2 14 10 2 5-5-1z" fill="#33343a"/></svg></button>
  <div class="tray">
    <svg viewBox="0 0 16 16"><path d="m2 11 6-6 6 6" stroke="#fff" fill="none" stroke-width="1.300"/></svg>
    <svg viewBox="0 0 16 16"><path d="M0 0h16v12H0z" fill="#a9adb5"/><path d="M1 1h14v10H1z" fill="#8d8f93"/><path d="M0 13h7v3H0zM9 13h7v3H9z" fill="#7b84ac"/></svg>
    <svg viewBox="0 0 16 16"><path d="M3 12a3 3 0 0 1 0-6 5 5 0 0 1 9 0 3 3 0 0 1 1 6z" fill="#8a8a8a"/><path d="m1 2 14 13" stroke="#fff" stroke-width="1.300"/></svg>
    <svg viewBox="0 0 16 16"><path d="M4.500 5V.5h6V5M2.500 5.500h9v6l-2 4h-7zM6 2.500h3" stroke="#eee" fill="none"/><path d="m9 12 2 2 4-4" stroke="#ccc" fill="none"/></svg>
    <svg viewBox="0 0 16 16"><path d="M7.500 0 15 2.500v5q0 5-7.500 8.500Q0 12.500 0 7.500v-5z" fill="#fff"/><path d="M7.500 1v14M1 7.500h13" stroke="#222" stroke-width="1.200"/><path d="m11.500 7 4.500 8.500H7z" fill="#fdb912"/><path d="M11.500 10v3M11.500 14v1" stroke="#222"/></svg>
    <svg viewBox="0 0 16 16"><path d="M5.500 5.500h9v7h-9zM15.500 7.500v3M2 2v3M5 2v3M1 4.500h5v2q-1 2-2.500 2v4h2" stroke="#fff" fill="none" stroke-width="1.200"/></svg>
    <svg viewBox="0 0 16 16"><path d="M0 1h16v11H0z" fill="#0b1526"/><path d="m1 11 3-8 4 5 3-6 4 1v7l-6 1z" fill="#3f7fb8"/><path d="m3 9 5-4 1 4zM10 4l4 5h-3z" fill="#e7f3fb"/><path d="M6 12h4l2 3H4z" fill="#777"/></svg>
    <svg viewBox="0 0 16 16"><path d="M.5.5h15v15H.5z" fill="#222" stroke="#76b900" stroke-width="1.400"/><path d="M3 4h10" stroke="#f2a9a0" stroke-width="2"/><path d="M3 7h10" stroke="#d7a8e0" stroke-width="2"/><path d="M3 10h10" stroke="#9be08f" stroke-width="2"/><path d="M3 12.500h10" stroke="#e8b47c"/><path d="M5.500 2v12M8 2v12M10.500 2v12" stroke="#222" stroke-width=".5"/></svg>
    <svg viewBox="0 0 16 16"><path d="M0 1h16v14H0z" fill="#2c3640"/><path d="M1 8q5-6 14-4v9q-9 1-14-5z" fill="#76b900"/><path d="M4 8q4-4 8 0-4 4-6 1 1-2 3-1" fill="none" stroke="#20301a" stroke-width="1.100"/></svg>
    <svg viewBox="0 0 16 16"><g stroke="#ddd" fill="none" stroke-width="1.200"><path d="M1 14A13 13 0 0 1 14 2M4.500 15A10 10 0 0 1 14 5.500M8 15a7 7 0 0 1 6-6"/></g><circle cx="12" cy="13.500" r="1.700" fill="#fff"/></svg>
    <svg viewBox="0 0 16 16"><path d="M.5 5.500h3l4-4v13l-4-4h-3zM9.500 5.500q2 2.500 0 5M11.500 3.500q3.500 4.500 0 9M13.500 1.500q4.500 6.500 0 13" stroke="#fff" fill="none"/></svg>
  </div>
  <time class="clock"><span>7:48 PM</span><span>12/21/2019</span></time>
  <button class="notif" aria-label="Notifications"><svg viewBox="0 0 16 16"><path d="M0 0h16v12H7l-3 3.500V12H0z" fill="#fff"/><path d="M3 3.500h10M3 6.500h10M3 9.500h6" stroke="#222"/></svg><span>2</span></button>
</div>
<script src="grid.js"></script>
</body>
</html>
```
FILE: styles.css
```css
* { box-sizing: border-box; }
:root {
  --ui: "DejaVu Sans Condensed", "DejaVu Sans", sans-serif;
  --win: "Open Sans", "Noto Sans", sans-serif;
  --chev: url("data:image/svg+xml,%3Csvg xmlns='http://www.w3.org/2000/svg' width='8' height='6'%3E%3Cpath d='M.5 1 4 4.500 7.500 1' fill='none' stroke='%23a8a8a8' stroke-width='1.500'/%3E%3C/svg%3E");
}
body { margin: 0; min-height: 100vh; display: flex; flex-direction: column; background: #232323; color: #e0e0e0; font: 11px/15px var(--ui); overflow: hidden; }
button, input, select { font: inherit; color: inherit; border: 0; margin: 0; padding: 0; background: none; border-radius: 0; outline: 0; min-width: 0; }
button { display: inline-flex; align-items: center; justify-content: center; white-space: nowrap; text-shadow: inherit; }
select { appearance: none; }
p, h1, h2 { margin: 0; font-size: inherit; font-weight: normal; }
svg { display: block; flex: none; }
.defs { position: absolute; width: 0; height: 0; }
.i16 { width: 16px; height: 16px; overflow: visible; }
.i24 { width: 24px; height: 24px; }
.logo { color: #ea7600; --white: #fff; --ball: #23588f; }
.eye-white { fill: var(--white, #232323); }
.eye-ball { fill: var(--ball, currentColor); }

/* window title */
.titlebar { height: 23px; display: flex; align-items: center; background: #4c4a48; color: #fff; font: 12px/16px var(--win); padding-left: 3px; gap: 4px; }
.titlebar h1 { flex: 1; font-size: 11px; }
.winbtns { display: flex; }
.winbtns button { width: 46px; height: 20px; align-self: flex-start; }
.winbtns button:last-child { width: 47px; padding-right: 3px; }
.winbtns svg { width: 12px; height: 12px; fill: none; stroke: #fff; }

/* top bar */
.menubar { height: 28px; display: flex; align-items: center; padding: 0 3px 2px 9px; text-shadow: 0 1px 1px #0008; }
.menubar .plain { padding: 1px 8px 0 7px; height: 20px; }
.menubar .plain:first-child { padding: 0 3px 0 0; }
.menubar .plain:first-child .i16 { width: 17px; height: 17px; }
.tabs { display: flex; gap: 2px; align-self: flex-end; margin-left: 19px; flex: 1; }
.tabs button { height: 20px; padding: 0 9px; background: #2b2b2b; color: #989898; border-radius: 3px 3px 0 0; }
.tabs .on { background: #424242; color: #fff; }
.tabs .add { padding: 0 5px; width: 19px; }
.tabs .add svg { width: 9px; height: 9px; }
.idblock { display: flex; height: 19px; border: 1px solid #3a3a3a; border-radius: 4px; background: #2b2b2b; overflow: hidden; width: 191px; margin-right: 6px; }
.idblock input { flex: 1; background: #1d1d1d; padding-left: 7px; color: #e6e6e6; }
.idblock button { width: 19px; }
.idblock .drop { width: 31px; }
.idblock .off { background: #2f2f2f; color: #777; }

/* shared controls */
.fld, .group { background-color: #2b2b2b; border-radius: 3px; height: 18px; box-shadow: 0 0 0 1px #3f3f3f; }
.group { display: inline-flex; overflow: hidden; gap: 1px; }
.group button { height: 18px; width: 18px; }
.lit { background: #585858; }
.blue { background: #5680c2; color: #fff; }
.drop, select { background-image: var(--chev); background-repeat: no-repeat; background-position: right 3px center; }
.drop { justify-content: flex-start; padding-left: 3px; }
select { padding-left: 7px; background-position: right 2px center; }
.w30 { width: 30px; }
.group .w19 { width: 19px; background-position: center; }
.group .w31 { width: 31px; background-position: right 1px center; }
.w98 { width: 98px; }
.sel { display: inline-grid; align-items: center; }
.sel > * { grid-area: 1 / 1; }
.sel svg { margin-left: 3px; z-index: 1; pointer-events: none; }
.sel select { width: 100%; padding-left: 25px; }
.w78 { width: 78px; }
.w108 { width: 108px; }
.w133 { width: 133px; }
.dim { color: #a0a0a0; }
input[type=checkbox] { appearance: none; width: 12px; height: 12px; border-radius: 2px; background: #5680c2 url("data:image/svg+xml,%3Csvg xmlns='http://www.w3.org/2000/svg' viewBox='0 0 12 12'%3E%3Cpath d='m2.500 6 2.500 2.700 4.500-6' fill='none' stroke='%23fff' stroke-width='1.600'/%3E%3C/svg%3E"); flex: none; }
input.white[type=checkbox] { width: 10px; height: 10px; background: #e0e0e0 url("data:image/svg+xml,%3Csvg xmlns='http://www.w3.org/2000/svg' viewBox='0 0 12 12'%3E%3Cpath d='m2.500 6 2.500 2.700 4.500-6' fill='none' stroke='%23222' stroke-width='2'/%3E%3C/svg%3E"); }
.edge { position: absolute; width: 8px; height: 14px; background: #2a2a2a; }
.edge svg { width: 5px; height: 9px; fill: none; stroke: #8c8c8c; }
.edge.right { right: 0; border-radius: 5px 0 0 5px; }
.edge.leftside { left: 0; border-radius: 0 5px 5px 0; }

/* areas */
.workspace { flex: 1; display: flex; gap: 3px; padding: 0 1px 2px; min-height: 0; }
.left { flex: 1; display: flex; flex-direction: column; gap: 3px; min-width: 0; }
.rightcol { width: 207px; display: flex; flex-direction: column; gap: 3px; }
.area { position: relative; border-radius: 6px; overflow: hidden; display: flex; flex-direction: column; text-shadow: 0 1px 1px #0007; }
.head { height: 25px; flex: none; display: flex; align-items: center; background: #383838; padding-left: 8px; gap: 7px; }
.links { display: flex; gap: 16px; margin-left: 6px; padding-top: 1px; }
.head select, .head .txt, .toolhead select, .toolhead .opts, .check span, .orient, .num, .frames input { padding-top: 1px; }

.viewport { flex: 303 1 0; background: #393939; }
.scene { position: absolute; left: 0; top: 0; width: 100%; height: 100%; fill: none; }
.note { font: 18px "Noto Sans", sans-serif; fill: #000; text-shadow: none; }
.toolhead, .viewhead, .viewbody { position: relative; display: flex; }
.toolhead { height: 25px; align-items: center; background: #383838; padding: 0 9px 0 8px; gap: 7px; }
.toolhead .i24 { margin-left: 5px; }
.check { display: flex; gap: 9px; align-items: center; margin-left: 10px; }
.orient { margin-left: 15px; width: 80px; }
.toolhead .w78 { margin-left: 51px; }
.opts { margin-left: auto; width: 60px; padding-left: 6px; }
.viewhead { height: 26px; align-items: center; padding: 0 9px; gap: 7px; }
.menus { display: flex; gap: 2px; margin-left: -1px; }
.menus button { height: 18px; background: #303030; border-radius: 3px; padding: 0 7px; }
.viewright { margin-left: auto; display: flex; gap: 7px; }
.viewbody { flex: 1; padding: 9px 8px 0; min-height: 0; }
.tools { display: flex; flex-direction: column; gap: 1px; }
.tools button { width: 39px; height: 34px; flex: none; background: #303030; position: relative; padding-right: 2px; }
.tools button svg { width: 24px; height: 24px; }
.tools .on { background: #5680c2; margin-top: -1px; border-radius: 0 0 3px 3px; }
.tools .first { margin-top: 6px; border-radius: 3px 3px 0 0; }
.tools .more::after { content: ""; position: absolute; right: 2px; bottom: 3px; border: 2px solid; border-color: transparent #999 #999 transparent; }
.stats { margin-left: 29px; color: #fff; line-height: 20px; margin-top: -2px; flex: 1; }
.navcol { display: flex; flex-direction: column; align-items: flex-end; gap: 2px; padding: 3px 1px 0 0; }
.axisgizmo { width: 66px; height: 74px; margin: 0 7px 3px 0; }
.axname text { font: bold 11px "DejaVu Sans", sans-serif; fill: #0009; text-anchor: middle; text-shadow: none; }
.navcol button { width: 28px; height: 28px; border-radius: 50%; background: #2b2b2b; color: #c8c8c8; flex: none; }
.viewbody .edge { top: 15px; }

.sequencer { flex: 269 1 0; }
.record { width: 22px; height: 24px; background: #212121; align-items: flex-start; padding-top: 2px; }
.record::before { content: ""; width: 16px; height: 16px; border-radius: 50%; background: #f00; }
.sequencer .record { margin-left: auto; margin-right: 3px; align-self: flex-start; }
.sequencer .transport { margin-right: 432px; }
.transport { display: flex; gap: 6px; }
.boxed { background: #3e3e3e; padding: 3px 3px 3px 4px; }
.keys { background: #3a3a3a; }
.group.keys button { width: 19px; }
.ruler { height: 23px; flex: none; display: flex; align-items: center; background: #282828; color: #a0a0a0; font-family: "DejaVu Sans", sans-serif; padding-top: 1px; }
.ruler span { flex: 1; text-align: center; }
.seqruler { padding-left: 35px; padding-right: 9px; }
.tracks { flex: 1; display: flex; flex-direction: column; position: relative; background: #2c2c2c; padding-bottom: 2px; }
.track { flex: 31 1 0; position: relative; display: flex; align-items: center; background: #282828 linear-gradient(90deg, transparent 110px, #363636 110px) -1px 0 / 111px 100%; }
.track:nth-child(odd) { background-color: #323232; }
.track b { font: 11px/12px "DejaVu Sans", sans-serif; writing-mode: vertical-rl; transform: rotate(180deg); width: 12px; margin-left: 3px; }
.track.cap { flex: 8 1 0; }
.track.base { flex: 15 1 0; background-color: #2c2c2c; border-top: 1px solid #3c3c3c; }
.brown { height: 5px; background: #43342d; }
.strip { flex: 1; align-self: stretch; margin: -1px 96px 2px 92px; background: #007d73; color: #ff0; padding-left: 231px; font: 18px/29px "Noto Sans", sans-serif; text-shadow: none; position: relative; }
.scroll { height: 8px; margin: 0 14px 0 8px; background: #666; border-radius: 4px; display: flex; justify-content: space-between; position: relative; }
.scroll i, .vscroll i { width: 8px; height: 8px; border-radius: 50%; background: #484848; border: 1px solid #777; }
.vscroll { position: absolute; right: 2px; top: 9px; bottom: 19px; width: 8px; background: #666; border-radius: 4px; display: flex; flex-direction: column; justify-content: space-between; }
.sequencer .edge { top: 40px; }
.playhead { position: absolute; bottom: 0; border-left: 2px solid #5680c2; }
.playhead output { position: absolute; top: 0; background: #5680c2; color: #fff; font-family: "DejaVu Sans", sans-serif; height: 19px; line-height: 20px; border-radius: 4px; text-align: center; }
.seqhead { left: 3px; top: 27px; }
.seqhead output { left: -11px; width: 30px; padding-right: 2px; }

.timeline { height: 77px; flex: none; }
.timeline .head { background: #424242; }
.pk { background: #424242; }
.group .txt { padding-left: 7px; background-color: #2b2b2b; width: 68px; background-position: right 2px center; }
.group .txt + .txt { width: 58px; }
.timeline .links { margin-left: 1px; }
.timeline .transport { margin-left: auto; }
.frames { margin-left: 220px; margin-right: 19px; display: flex; gap: 7px; }
.frames input { background: #585858; height: 18px; }
.cur { width: 73px; border-radius: 3px; text-align: center; }
.timeline .frames .group { background: #424242; }
.num { display: flex; align-items: center; justify-content: space-between; background: #585858; padding-left: 15px; padding-right: 13px; height: 18px; }
.num input { width: 34px; text-align: right; height: 16px; padding-top: 0; }
.start { width: 87px; }
.end { width: 83px; }
.timeruler { background: #2b2b2b; padding-left: 80px; padding-right: 42px; }
.timebody { flex: 1; background: #323232; position: relative; display: flex; flex-direction: column; justify-content: flex-end; padding-bottom: 2px; }
.timebody .scroll { margin: 0 8px; }
.range { position: absolute; left: 37px; right: 41px; top: 0; bottom: 0; border-right: 1px solid #000; background: linear-gradient(90deg, transparent 85px, #282828 85px) 0 0 / 86px 100%, linear-gradient(90deg, transparent 42px, #383838 42px, #383838 43px, transparent 43px) 0 0 / 86px 100%, #424242; }
.timehead { left: 41px; top: 27px; }
.timehead output { left: -14px; width: 26px; }
.timeline .edge { top: 39px; }

.outliner { flex: 155 1 0; background: #282828; }
.find { flex: 1; margin: 0 4px 0 11px; display: flex; align-items: center; background: #1d1d1d; border: 1px solid #3f3f3f; border-radius: 3px; height: 19px; padding-left: 3px; }
.find .i16 { width: 15px; height: 15px; }
.find input { width: 60px; }
.rows { flex: 1; background: repeating-linear-gradient(#282828 0 20px, #2d2d2d 20px 40px); }
.row { height: 20px; display: flex; align-items: center; padding-top: 4px; color: #c8c8c8; }
.root { padding-left: 22px; gap: 6px; }
.child { padding-left: 45px; gap: 5px; }
.ring { width: 20px; height: 18px; border-radius: 5px; background: #414141; display: grid; place-items: center; }
.child .plain { margin: 0 9px 0 auto; }
.properties { flex: 497 1 0; background: #424242; }
.crumb { display: flex; gap: 7px; align-items: center; flex: 1; margin-left: 8px; }
.pin { margin-right: 9px; color: #999; }
.propbody { flex: 1; display: flex; }
.ptabs { width: 28px; flex: none; background: #232323; padding: 9px 0 0 2px; display: flex; flex-direction: column; gap: 2px; }
.ptabs button { height: 26px; background: #2b2b2b; border-radius: 4px 0 0 4px; color: #bdbdbd; }
.ptabs .on { background: #424242; color: #eee; }
.ptabs .gap { margin-top: 8px; }
.ptabs .gap2 { margin-top: 16px; }
.ptabs .pink { color: #c9656d; }
.panels { flex: 1; min-width: 0; }
.panels h2 { height: 24px; display: flex; align-items: center; font-size: 12px; line-height: 17px; color: #cfcfcf; padding: 2px 8px 0; gap: 7px; }
.panels h2::before { content: ""; margin: 0 0 2px 1px; border: solid transparent; border-width: 4px 0 4px 6px; border-left-color: #999; }
.panels h2.open::before { margin: 0 -1px 2px 0; border-width: 7px 4px 0; border-color: #999 transparent; }
.panels h2::after { content: ""; margin-left: auto; width: 11px; height: 5px; background: radial-gradient(circle at 1px 1px, #888 40%, transparent 45%) 0 0 / 3px 3px; }
.panels h2 label { display: flex; gap: 6px; align-items: center; margin-left: 2px; }
.pbody { background: #383838; }
.fields { height: 86px; padding: 9px 8px 9px 4px; display: grid; grid-template-columns: 79px minmax(0, 1fr); gap: 7px 8px; align-items: center; }
.fields > label { text-align: right; white-space: nowrap; color: #e0e0e0; }
.idfield { display: flex; align-items: center; justify-content: space-between; height: 18px; background: #1d1d1d; border-radius: 3px; padding: 0 1px 0 3px; box-shadow: 0 0 0 1px #3f3f3f; }
.idfield input { flex: 1; width: 0; }
.addwrap { padding: 9px 8px 14px 9px; }
.addbtn { width: 100%; height: 18px; background: #575757; border-radius: 3px; }

/* status bar */
.status { height: 20px; display: flex; align-items: center; background: #303030; color: #a0a0a0; padding: 0 30px 0 11px; }
.mouse { width: 12px; height: 16px; margin-right: 224px; fill: none; stroke: #a0a0a0; }
.mouse .f { fill: #b0b0b0; stroke: none; }
.status span { margin-left: auto; padding-top: 1px; }
.status .mouse:nth-child(3) { margin-right: 0; }

/* desktop task bar */
.taskbar { height: 40px; display: flex; background: #222326; color: #fff; font: 11px/18px var(--win); }
.startbtn { width: 48px; }
.startbtn svg { width: 16px; height: 16px; }
.wsearch { width: 344px; border: 1px solid #686868; background: #333; display: flex; align-items: center; gap: 11px; padding-left: 12px; }
.wsearch input { font-size: 14px; width: 240px; }
.wsearch input::placeholder { color: #d0d0d0; opacity: 1; }
.tview { width: 48px; margin-right: 3px; }
.tview svg { width: 16px; height: 16px; }
.app { width: 49px; padding: 2px 2px 0 0; position: relative; }
.app svg { width: 22px; height: 22px; }
.app::after { content: ""; position: absolute; left: 4px; right: 5px; bottom: 0; height: 2px; background: #b5b2ac; }
.active { background: linear-gradient(90deg, #505254 44px, #3c3e40 45px); width: 48px; margin: 0 1px 0 0; }
.active::after { left: 0; right: 0; }
.tray { margin-left: auto; display: flex; gap: 8px; align-items: center; }
.tray svg { width: 16px; height: 16px; }
.clock { width: 70px; display: flex; flex-direction: column; align-items: center; justify-content: center; margin-left: 1px; }
.notif { width: 46px; border-right: 1px solid #666; margin-right: 4px; position: relative; }
.notif svg { width: 16px; height: 16px; margin-right: 12px; }
.notif span { position: absolute; right: 12px; bottom: 5px; width: 17px; height: 17px; line-height: 15px; border-radius: 50%; background: #222326; border: 1px solid #aaa; }
```
FILE: grid.js
```js
// Ground-plane grid, drawn in perspective from the two vanishing points.
(function () {
  var origin = [578, 214.2], vx = [1284, -137], vy = [-499, -137];
  var stepX = 0.0162, stepY = 0.0128, near = -0.346, far = 0.783;
  function point(v, u) {
    var w = 1 + v + u;
    return [0, 1].map(function (k) {
      return ((origin[k] + v * vx[k] + u * vy[k]) / w).toFixed(1);
    }).join(" ");
  }
  var minor = "", major = "";
  for (var i = -60; i <= 120; i++) {
    if (i === 0) continue;
    var v = i * stepX, u = i * stepY;
    var d = "M" + point(v, near - v) + "L" + point(v, far - v) +
            "M" + point(near - u, u) + "L" + point(far - u, u);
    if (i % 10) minor += d; else major += d;
  }
  document.getElementById("minor").setAttribute("d", minor);
  document.getElementById("major").setAttribute("d", major);
})();
```
